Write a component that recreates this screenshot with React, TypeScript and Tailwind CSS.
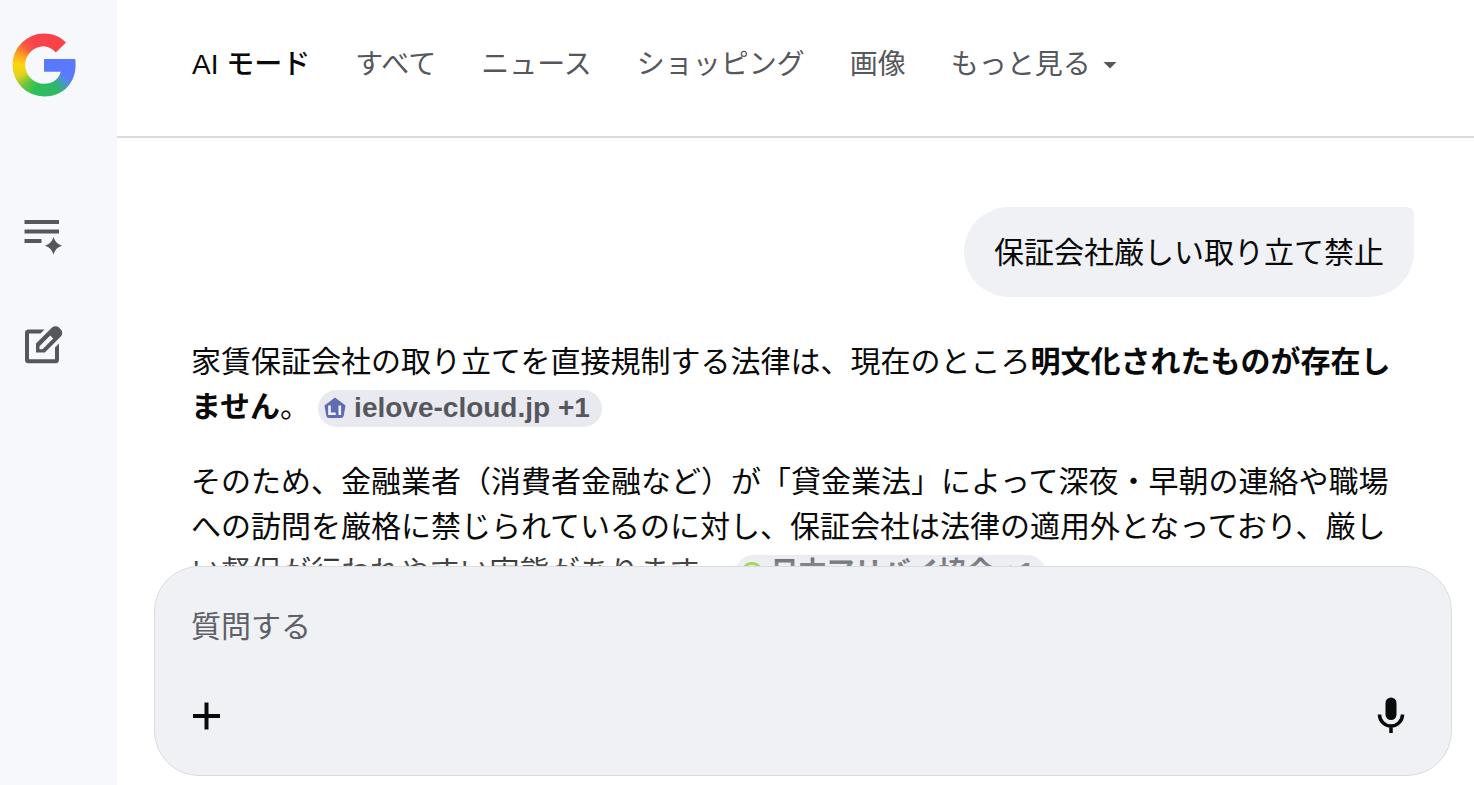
import type { ReactNode } from "react";

const tabs = ["すべて", "ニュース", "ショッピング", "画像"];

function GoogleLogo() {
  return (
    <svg viewBox="0 0 64 64" className="size-16" aria-hidden="true">
      <defs>
        <clipPath id="g-shape">
          <path d="M54 9.500 43.800 19.500A18.500 18.500 0 0 0 32 13.200C21.500 13.200 13.200 21.500 13.200 32s8.300 18.800 18.800 18.800c8.500 0 15-4.500 16.800-12.300H32V26h31.200c.3 1.800.4 3.800.4 6 0 18.500-13.100 31.500-31.600 31.500A31.500 31.500 0 0 1 .5 32 31.500 31.500 0 0 1 32 .5c9 0 16 3 22 9Z" />
        </clipPath>
      </defs>
      <foreignObject width="64" height="64" clipPath="url(#g-shape)">
        <div className="size-16 bg-[conic-gradient(from_0deg,#f8434a_0deg,#fb4348_60deg,#5a79ff_61deg,#5a79ff_115deg,#4e90d8_128deg,#2fb768_150deg,#2dbf58_200deg,#65c53e_222deg,#e4d31c_248deg,#fdd60f_272deg,#fba321_292deg,#f95a40_315deg,#f8434a_335deg)]" />
      </foreignObject>
      <path d="M32 26H50V38.500H32Z" fill="#5a79ff" />
    </svg>
  );
}

function HistoryIcon() {
  return (
    <svg viewBox="0 0 40 36" className="h-9 w-10" fill="#55575c" aria-hidden="true">
      <path d="M.5 1h34.500v4H.5zM.5 10.500h34.500v4H.5zM.5 20h17v4H.5z" />
      <path d="M29.500 18c1.800 5 3.800 7 8.500 8.700-4.700 1.700-6.700 3.700-8.500 8.700-1.800-5-3.800-7-8.500-8.700 4.700-1.700 6.700-3.700 8.500-8.700Z" />
    </svg>
  );
}

function NewThreadIcon() {
  return (
    <svg viewBox="0 0 40 40" className="size-10" aria-hidden="true">
      <path d="M20.500 4.500 16.500 8.500H5V34.200H31V22.500L35 18.500V35a3.500 3.500 0 0 1-3.500 3.200H4.500A3.500 3.500 0 0 1 1 34.700V8a3.500 3.500 0 0 1 3.500-3.500Z" fill="#55575c" />
      <path
        fillRule="evenodd"
        fill="#55575c"
        d="M12 27.500V18.600L28 2.600a5 5 0 0 1 7 0l1.800 1.800a5 5 0 0 1 0 7L20.800 27.500ZM15.500 24.200h3L29.200 13.500l-3-3L15.500 21.200Z"
      />
    </svg>
  );
}

function HouseFavicon() {
  return (
    <svg viewBox="0 0 22 22" className="size-[22px]" aria-hidden="true">
      <path d="M11 .5 21.500 8.500 19.800 18.500a3 3 0 0 1-3 2.500H5.200a3 3 0 0 1-3-2.500L.5 8.500Z" fill="#5f6cb4" />
      <path d="M5.500 8.500v8.300h6.200M15.800 8.500v9.500" fill="none" stroke="#f4f5fb" strokeWidth="2.600" />
    </svg>
  );
}

function LeafFavicon() {
  return (
    <svg viewBox="0 0 22 22" className="size-[22px]" aria-hidden="true">
      <circle cx="11" cy="11" r="9.500" fill="#e9f3cf" stroke="#8cc528" strokeWidth="3" />
    </svg>
  );
}

function SourceChip({ icon, children }: { icon: ReactNode; children: ReactNode }) {
  return (
    <button
      type="button"
      className="mb-0.5 ml-2 inline-flex h-[37px] items-center gap-2 rounded-full bg-[#e8eaf0] pr-3 pl-1.5 align-middle text-[28px] leading-9 font-bold whitespace-nowrap text-[#55575c]"
    >
      {icon}
      <span>{children}</span>
    </button>
  );
}

export default function App() {
  return (
    <div className="flex h-screen bg-white font-['Liberation_Sans','Noto_Sans_CJK_JP',sans-serif] text-[#0a0a0a]" lang="ja">
      <aside className="flex w-[117px] shrink-0 flex-col items-start bg-[#f7f8fb]">
        <a href="#home" aria-label="Google" className="mt-[33px] ml-3">
          <GoogleLogo />
        </a>
        <button type="button" aria-label="履歴" className="mt-[122px] ml-6">
          <HistoryIcon />
        </button>
        <button type="button" aria-label="新しいスレッド" className="mt-[70px] ml-6">
          <NewThreadIcon />
        </button>
      </aside>

      <div className="flex min-w-0 flex-1 flex-col">
        <header className="shrink-0 border-b-2 border-[#dadce0] pt-[45px] pb-[51px] pl-[75px]">
          <nav className="flex items-center gap-[45px] text-[28px] leading-10 whitespace-nowrap text-[#55575c]">
            <a href="#ai" aria-current="page" className="font-medium text-[#0a0a0a]">
              AI モード
            </a>
            {tabs.map((tab) => (
              <a key={tab} href={"#" + tab}>
                {tab}
              </a>
            ))}
            <button type="button" className="flex items-center gap-3">
              もっと見る
              <svg viewBox="0 0 14 7" className="h-[7px] w-3.5" fill="currentColor" aria-hidden="true">
                <path d="M.5 0h13L7 6.500Z" />
              </svg>
            </button>
          </nav>
        </header>

        <main className="relative min-h-0 flex-1 overflow-hidden pt-[69px] pr-[60px] pl-[74px] text-[30px] leading-[45px]">
          <div className="flex justify-end">
            <p className="rounded-[45px] rounded-tr-lg bg-[#eff1f5] px-[30px] pt-[23px] pb-[22px]">保証会社厳しい取り立て禁止</p>
          </div>
          <p className="mt-[42px]">
            家賃保証会社の取り立てを直接規制する法律は、現在のところ
            <strong className="font-bold">明文化されたものが存在しません</strong>。
            <SourceChip icon={<HouseFavicon />}>ielove-cloud.jp +1</SourceChip>
          </p>
          <p className="mt-[30px]">
            そのため、金融業者（消費者金融など）が「貸金業法」によって深夜・早朝の連絡や職場への訪問を厳格に禁じられているのに対し、保証会社は法律の適用外となっており、厳しい督促が行われやすい実態があります。
            <SourceChip icon={<LeafFavicon />}>日本アリバイ協会 +1</SourceChip>
          </p>
          <div className="pointer-events-none absolute inset-x-0 bottom-0 h-4 bg-linear-to-b from-white/0 to-white/30" />
        </main>

        <form
          className="mr-[22px] mb-[9px] ml-[37px] flex shrink-0 flex-col rounded-[45px] border border-[#dadce0] bg-[#eff1f5] px-9 pt-[37px] pb-[39px]"
          onSubmit={(e) => e.preventDefault()}
        >
          <input
            type="text"
            aria-label="質問する"
            placeholder="質問する"
            className="h-[45px] w-full bg-transparent text-[30px] outline-none placeholder:text-[#5e6066]"
          />
          <div className="mt-[47px] flex items-center justify-between">
            <button type="button" aria-label="追加">
              <svg viewBox="0 0 30 40" className="h-10 w-[30px]" fill="#0a0a0a" aria-hidden="true">
                <path d="M13.500 6.500h4v11.500h11.500v4H17.500v11.500h-4V22H2v-4H13.500Z" />
              </svg>
            </button>
            <button type="button" aria-label="音声入力" className="mr-[9px]">
              <svg viewBox="0 0 30 40" className="h-10 w-[30px]" aria-hidden="true">
                <rect x="9.500" y="1.500" width="11" height="22.500" rx="5.500" fill="#0a0a0a" />
                <path d="M3.500 18.500a11.500 11.500 0 0 0 23 0M15 30v7" fill="none" stroke="#0a0a0a" strokeWidth="3.500" />
              </svg>
            </button>
          </div>
        </form>
      </div>
    </div>
  );
}
